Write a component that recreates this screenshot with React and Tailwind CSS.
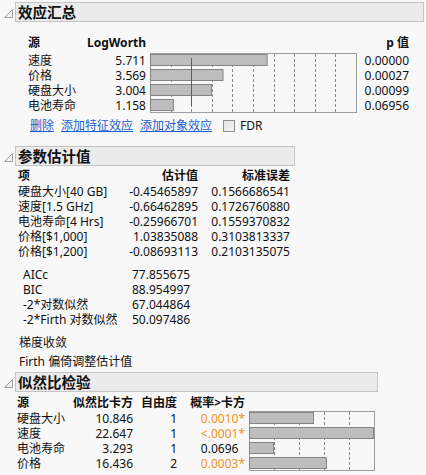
import React from 'react';

const effects = [
  {name: '速度', lw: 5.711, p: '0.00000'},
  {name: '价格', lw: 3.569, p: '0.00027'},
  {name: '硬盘大小', lw: 3.004, p: '0.00099'},
  {name: '电池寿命', lw: 1.158, p: '0.06956'},
];

const params = [
  ['硬盘大小[40 GB]', '-0.45465897', '0.1566686541'],
  ['速度[1.5 GHz]', '-0.66462895', '0.1726760880'],
  ['电池寿命[4 Hrs]', '-0.25966701', '0.1559370832'],
  ['价格[$1,000]', '1.03835088', '0.3103813337'],
  ['价格[$1,200]', '-0.08693113', '0.2103135075'],
];

const fits = [
  ['AICc', '77.855675'],
  ['BIC', '88.954997'],
  ['-2*对数似然', '67.044864'],
  ['-2*Firth 对数似然', '50.097486'],
];

const lrTests = [
  {name: '硬盘大小', chi: '10.846', df: '1', p: '0.0010', sig: true, w: 65},
  {name: '速度', chi: '22.647', df: '1', p: '<.0001', sig: true, w: 125},
  {name: '电池寿命', chi: '3.293', df: '1', p: '0.0696', sig: false, w: 25},
  {name: '价格', chi: '16.436', df: '2', p: '0.0003', sig: true, w: 78},
];

function Triangle() {
  return (
    <svg width="15" height="20" viewBox="0 0 15 20" className="shrink-0">
      <path d="M4.5 15.5 L12.5 15.5 L12.5 7.5 Z" fill="#f2f2f2" stroke="#9a9a9a" strokeWidth="1" />
    </svg>
  );
}

function OutlineHeader({title, width}) {
  return (
    <div className="flex h-[20px]">
      <Triangle />
      <div
        className={`${width} h-[20px] bg-[#ebebeb] border border-[#c4c4c4] flex items-center pl-[2px] text-[14.5px] font-bold leading-none text-[#111]`}
      >
        {title}
      </div>
    </div>
  );
}

// dashed grid + bars, one row per 15px
function BarChart({width, step, lines, bars, refLine}) {
  const h = bars.length * 15;
  return (
    <svg width={width} height={h} className="shrink-0 block">
      <rect x="0.5" y="0.5" width={width - 1} height={h - 1} fill="none" stroke="#9c9c9c" />
      {Array.from({length: lines}, (_, i) => {
        const x = Math.round(step * (i + 1)) + 0.5;
        return (
          <line key={i} x1={x} x2={x} y1="1" y2={h - 1} stroke="#8c8c8c" strokeDasharray="3 2" />
        );
      })}
      {bars.map((w, i) => (
        <rect
          key={i}
          x="0.5"
          y={i * 15 + 1.5}
          width={Math.max(1, w - 1)}
          height="11"
          fill="#bdbdbd"
          stroke="#858585"
        />
      ))}
      {refLine && (
        <line x1={refLine + 0.5} x2={refLine + 0.5} y1="5" y2={h - 7} stroke="#2f5fd8" strokeWidth="1" />
      )}
    </svg>
  );
}

export default function App() {
  return (
    <div className="w-[426px] h-[475px] overflow-hidden bg-[#f8f8f8] pt-[2px] text-[12px] leading-[15px] text-[#111] font-['Noto_Sans','Noto_Sans_CJK_SC',sans-serif]">
      {/* 效应汇总 */}
      <OutlineHeader title="效应汇总" width="w-[409px]" />
      <div className="mt-[13px] flex h-[15px] font-bold">
        <div className="pl-[28px] w-[84px]">源</div>
        <div className="w-[62px] text-right">LogWorth</div>
        <div className="w-[211px]" />
        <div className="w-[52px] text-right">p 值</div>
      </div>
      <div className="mt-[3px] flex">
        <div>
          {effects.map((e) => (
            <div key={e.name} className="flex h-[15px]">
              <div className="pl-[28px] w-[98px]">{e.name}</div>
              <div className="w-[48px] text-right">{e.lw.toFixed(3)}</div>
            </div>
          ))}
        </div>
        <div className="ml-[4px]">
          <BarChart width={207} step={20.6} lines={9} bars={effects.map((e) => e.lw * 20.6)} refLine={41} />
        </div>
        <div>
          {effects.map((e) => (
            <div key={e.name} className="w-[52px] h-[15px] text-right">{e.p}</div>
          ))}
        </div>
      </div>
      <div className="mt-[5px] h-[15px] flex items-center pl-[30px] text-[#1d5fd0]">
        <span className="underline">删除</span>
        <span className="underline ml-[7px]">添加特征效应</span>
        <span className="underline ml-[7px]">添加对象效应</span>
        <span className="ml-[11px] w-[12px] h-[12px] border border-[#8e8e8e] bg-gradient-to-br from-[#e4e4e4] to-[#f4f4f4]" />
        <span className="ml-[5px] text-[#111]">FDR</span>
      </div>

      {/* 参数估计值 */}
      <div className="mt-[13px]">
        <OutlineHeader title="参数估计值" width="w-[280px]" />
      </div>
      <div className="mt-[2px] flex h-[15px] font-bold pl-[18px]">
        <div className="w-[110px]">项</div>
        <div className="w-[70px] text-right">估计值</div>
        <div className="w-[92px] text-right">标准误差</div>
      </div>
      <div className="mt-[1px]">
        {params.map(([t, est, se]) => (
          <div key={t} className="flex h-[15px] pl-[18px]">
            <div className="w-[110px]">{t}</div>
            <div className="w-[70px] text-right">{est}</div>
            <div className="w-[92px] text-right">{se}</div>
          </div>
        ))}
      </div>
      <div className="mt-[8px]">
        {fits.map(([label, v]) => (
          <div key={label} className="flex h-[15px] pl-[23px]">
            <div className="w-[109px]">{label}</div>
            <div>{v}</div>
          </div>
        ))}
      </div>
      <div className="mt-[8px] h-[15px] pl-[19px]">梯度收敛</div>
      <div className="mt-[4px] h-[15px] pl-[19px]">Firth 偏倚调整估计值</div>

      {/* 似然比检验 */}
      <div className="mt-[3px]">
        <OutlineHeader title="似然比检验" width="w-[363px]" />
      </div>
      <div className="mt-[3px] flex h-[15px] font-bold pl-[17px]">
        <div className="w-[56px]">源</div>
        <div className="w-[60px] text-right">似然比卡方</div>
        <div className="w-[44px] text-right">自由度</div>
        <div className="w-[68px] text-right">概率&gt;卡方</div>
      </div>
      <div className="mt-[1px] flex">
        <div>
          {lrTests.map((r) => (
            <div key={r.name} className="flex h-[15px] pl-[17px]">
              <div className="w-[56px]">{r.name}</div>
              <div className="w-[60px] text-right">{r.chi}</div>
              <div className="w-[44px] text-right">{r.df}</div>
              <div className={`w-[68px] text-right ${r.sig ? 'text-[#f39224]' : ''}`}>
                {r.p}
                <span className={r.sig ? '' : 'invisible'}>*</span>
              </div>
            </div>
          ))}
        </div>
        <div className="ml-[4px]">
          <BarChart width={126} step={25} lines={4} bars={lrTests.map((r) => r.w)} />
        </div>
      </div>
    </div>
  );
}
